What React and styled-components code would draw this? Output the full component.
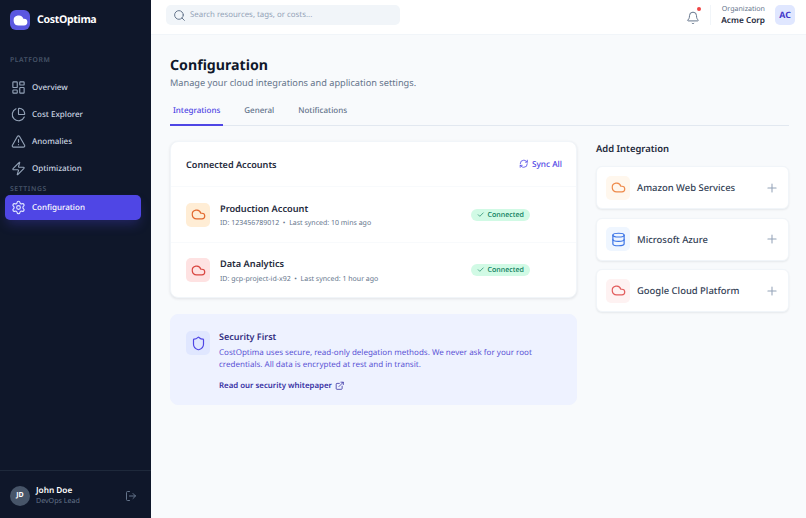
import React from 'react';
import styled, { createGlobalStyle } from 'styled-components';
import { LayoutDashboard, PieChart, TriangleAlert, Zap, Settings, LogOut, Search, Bell, Cloud, Database, Plus, RefreshCw, Check, Shield, ExternalLink } from 'lucide-react';

const Global = createGlobalStyle`
  * { box-sizing: border-box; }
  html, body { margin: 0; padding: 0; width: 806px; height: 518px; overflow: hidden; }
  body { font-family: "Noto Sans", "Liberation Sans", sans-serif; background: #f8fafc; text-rendering: geometricPrecision; }
`;
const Shell = styled.div`display: flex; width: 806px; height: 518px;`;
const Sidebar = styled.aside`
  width: 151px; flex: none; background: #0f172a; display: flex; flex-direction: column;
`;
const Brand = styled.div`display: flex; align-items: center; gap: 7px; padding: 10px 10px 0; height: 30px;`;
const LogoMark = styled.div`
  width: 20px; height: 20px; border-radius: 6px; background: #5b57e0; display: flex; align-items: center; justify-content: center;
`;
const BrandName = styled.span`color: #fff; font-size: 10.6px; font-weight: 700; letter-spacing: -0.35px;`;
const SectionLabel = styled.div`
  color: #475569; font-size: 6.8px; font-weight: 600; letter-spacing: 0.6px; padding: 0 10px;
  margin-top: ${p => p.$top}px; margin-bottom: ${p => p.$bottom}px; line-height: 10px;
`;
const Nav = styled.nav`display: flex; flex-direction: column; gap: 2px; padding: 0 10px 0 5px;`;
const NavItem = styled.div`
  display: flex; align-items: center; gap: 6px; height: 25px; padding: 0 6px; border-radius: 5px;
  font-size: 8px; font-weight: 500; color: ${p => p.$active ? '#fff' : '#cbd5e1'};
  background: ${p => p.$active ? '#4f46e5' : 'transparent'};
  box-shadow: ${p => p.$active ? '0 6px 12px -2px rgba(79,70,229,.3)' : 'none'};
  svg { color: ${p => p.$active ? '#e0e7ff' : '#94a3b8'}; flex: none; }
`;
const Footer = styled.div`
  margin-top: auto; height: 48px; border-top: 1px solid #1e293b; display: flex; align-items: center; padding: 2px 14px 0 10px;
`;
const Avatar = styled.div`
  width: 20px; height: 20px; border-radius: 50%; background: #475569; color: #fff; font-size: 7px; font-weight: 700;
  display: flex; align-items: center; justify-content: center; flex: none;
`;
const UserText = styled.div`margin-left: 6px; flex: 1; line-height: 11px; padding-top: 1px;`;
const UserName = styled.div`color: #fff; font-size: 8.26px; font-weight: 600;`;
const UserRole = styled.div`color: #64748b; font-size: 7.08px;`;
const MainCol = styled.div`flex: 1; min-width: 0; display: flex; flex-direction: column;`;
const Topbar = styled.header`
  height: 35px; flex: none; background: #fff; border-bottom: 1px solid #f1f5f9; display: flex; align-items: flex-start; padding: 5px 11px 0 15px;
`;
const SearchBox = styled.div`
  width: 234px; height: 20px; background: #f1f5f9; border-radius: 5px; display: flex; align-items: center; gap: 4.5px; padding: 0 6.5px;
  color: #94a3b8; font-size: 7.87px;
  svg { color: #64748b; }
`;
const TopRight = styled.div`margin-left: auto; display: flex; align-items: center; height: 20px;`;
const BellWrap = styled.div`position: relative; width: 14px; height: 14px; color: #64748b; margin-right: 10px;`;
const BellDot = styled.span`position: absolute; top: -1px; right: -1px; width: 4px; height: 4px; border-radius: 50%; background: #ef4444;`;
const VDivider = styled.div`width: 1px; height: 20px; background: #f1f5f9; margin-right: 10px;`;
const OrgText = styled.div`text-align: right; line-height: 11px; margin-right: 10px;`;
const OrgLabel = styled.div`color: #64748b; font-size: 7.08px;`;
const OrgName = styled.div`color: #1e293b; font-size: 8.26px; font-weight: 600;`;
const OrgBadge = styled.div`
  width: 20px; height: 20px; border-radius: 5px; background: #e0e7ff; color: #4338ca; font-size: 8.8px; font-weight: 700;
  display: flex; align-items: center; justify-content: center;
`;
const Content = styled.main`flex: 1; padding: 21px 17px 0 19px;`;
const Title = styled.h1`margin: 0; font-size: 14.16px; line-height: 20px; font-weight: 700; color: #0f172a;`;
const Subtitle = styled.p`margin: 0; font-size: 9.2px; line-height: 13px; color: #64748b;`;
const Tabs = styled.div`display: flex; gap: 18px; margin-top: 9px; border-bottom: 1px solid #e2e8f0; height: 28px;`;
const Tab = styled.div`
  padding: 5.5px 3px 0; height: 28px; font-size: 8px; font-weight: 500; line-height: 14px;
  color: ${p => p.$active ? '#4f46e5' : '#64748b'};
  border-bottom: 2px solid ${p => p.$active ? '#4f46e5' : 'transparent'};
`;
const Columns = styled.div`display: flex; gap: 19px; margin-top: 15px; align-items: flex-start;`;
const LeftCol = styled.div`width: 407px; flex: none; display: flex; flex-direction: column; gap: 16px;`;
const RightCol = styled.div`flex: 1; min-width: 0; padding-top: 1px;`;
const Card = styled.section`
  background: #fff; border: 1px solid #f1f5f9; border-radius: 8px; box-shadow: 0 1px 3px rgba(15,23,42,.1);
`;
const CardHeader = styled.div`
  height: 45px; padding: 0 14px 0 15px; display: flex; align-items: center; justify-content: space-between; border-bottom: 1px solid #f8fafc;
`;
const CardTitle = styled.h2`margin: 0; font-size: 9.1px; font-weight: 600; color: #1e293b;`;
const SyncBtn = styled.div`display: flex; align-items: center; gap: 3px; color: #4f46e5; font-size: 8.26px; font-weight: 500;`;
const AccountRow = styled.div`
  height: ${p => p.$h}px; padding: 0 14px 0 15px; display: flex; align-items: center;
  border-top: ${p => p.$rule ? '1px solid #f8fafc' : 'none'};
`;
const IconTile = styled.div`
  width: 24px; height: 24px; border-radius: 5px; flex: none; display: flex; align-items: center; justify-content: center;
  background: ${p => p.$bg}; color: ${p => p.$fg};
`;
const AccountInfo = styled.div`margin-left: 10px; width: 251px; flex: none; margin-top: 2px;`;
const AccountName = styled.div`font-size: 9.2px; line-height: 14px; font-weight: 600; color: #1e293b;`;
const AccountMeta = styled.div`font-size: 7px; line-height: 10px; margin-top: 3.5px; color: #64748b; white-space: pre;`;
const Pill = styled.span`
  display: inline-flex; align-items: center; gap: 3px; height: 12px; padding: 0 6px; border-radius: 6px;
  background: #d1fae5; color: #047857; font-size: 7.08px; font-weight: 500;
`;
const Notice = styled.section`
  background: #eef2ff; border-radius: 8px; height: 91px; padding: 15px 15px; display: flex; gap: 9px; border: 1px solid #eef2ff;
`;
const NoticeTile = styled(IconTile)`background: #e0e7ff; color: #4f46e5; margin-top: 1px;`;
const NoticeBody = styled.div`flex: 1; min-width: 0;`;
const NoticeTitle = styled.h3`margin: 0; font-size: 9px; line-height: 13px; font-weight: 600; color: #312e81;`;
const NoticeText = styled.p`margin: 4px 0 0; font-size: 8.03px; line-height: 12px; color: #5a52d5;`;
const NoticeLink = styled.a`
  display: inline-flex; align-items: center; gap: 3px; margin-top: 5px; font-size: 7.85px; font-weight: 600; color: #3730a3; line-height: 12px;
`;
const SideTitle = styled.h2`margin: 0 0 10px; font-size: 9.44px; line-height: 14px; font-weight: 600; color: #1e293b;`;
const IntegrationList = styled.div`display: flex; flex-direction: column; gap: 8.5px;`;
const IntegrationCard = styled.div`
  height: 43px; background: #fff; border: 1px solid #f1f5f9; border-radius: 6px; box-shadow: 0 1px 2px rgba(15,23,42,.08);
  display: flex; align-items: center; padding: 0 9px; gap: 7px;
`;
const IntegrationName = styled.span`flex: 1; font-size: 9.44px; font-weight: 500; color: #334155;`;
const AddIcon = styled.span`display: flex; color: #94a3b8;`;

const nav = [[LayoutDashboard, 'Overview'], [PieChart, 'Cost Explorer'], [TriangleAlert, 'Anomalies'], [Zap, 'Optimization']];

export default function App() {
  return (
    <Shell>
      <Global />
      <Sidebar>
        <Brand>
          <LogoMark><Cloud size={15} color="#fff" fill="#fff" /></LogoMark>
          <BrandName>CostOptima</BrandName>
        </Brand>
        <SectionLabel $top={25} $bottom={10}>PLATFORM</SectionLabel>
        <Nav>
          {nav.map(([I, t]) => <NavItem key={t}><I size={15} strokeWidth={1.8} />{t}</NavItem>)}
        </Nav>
        <SectionLabel $top={3} $bottom={1}>SETTINGS</SectionLabel>
        <Nav>
          <NavItem $active><Settings size={15} strokeWidth={1.8} />Configuration</NavItem>
        </Nav>
        <Footer>
          <Avatar>JD</Avatar>
          <UserText>
            <UserName>John Doe</UserName>
            <UserRole>DevOps Lead</UserRole>
          </UserText>
          <LogOut size={12} color="#64748b" />
        </Footer>
      </Sidebar>
      <MainCol>
        <Topbar>
          <SearchBox><Search size={13} strokeWidth={1.8} />Search resources, tags, or costs...</SearchBox>
          <TopRight>
            <BellWrap><Bell size={14} strokeWidth={1.7} /><BellDot /></BellWrap>
            <VDivider />
            <OrgText>
              <OrgLabel>Organization</OrgLabel>
              <OrgName>Acme Corp</OrgName>
            </OrgText>
            <OrgBadge>AC</OrgBadge>
          </TopRight>
        </Topbar>
        <Content>
          <Title>Configuration</Title>
          <Subtitle>Manage your cloud integrations and application settings.</Subtitle>
          <Tabs>
            <Tab $active>Integrations</Tab>
            <Tab>General</Tab>
            <Tab>Notifications</Tab>
          </Tabs>
          <Columns>
            <LeftCol>
              <Card>
                <CardHeader>
                  <CardTitle>Connected Accounts</CardTitle>
                  <SyncBtn><RefreshCw size={9.5} />Sync All</SyncBtn>
                </CardHeader>
                <AccountRow $h={55}>
                  <IconTile $bg="#ffedd5" $fg="#e2682e"><Cloud size={15} strokeWidth={1.9} /></IconTile>
                  <AccountInfo>
                    <AccountName>Production Account</AccountName>
                    <AccountMeta>ID: 123456789012  •  Last synced: 10 mins ago</AccountMeta>
                  </AccountInfo>
                  <Pill><Check size={7.5} />Connected</Pill>
                </AccountRow>
                <AccountRow $h={55} $rule>
                  <IconTile $bg="#fee2e2" $fg="#d9453f"><Cloud size={15} strokeWidth={1.9} /></IconTile>
                  <AccountInfo>
                    <AccountName>Data Analytics</AccountName>
                    <AccountMeta>ID: gcp-project-id-x92  •  Last synced: 1 hour ago</AccountMeta>
                  </AccountInfo>
                  <Pill><Check size={7.5} />Connected</Pill>
                </AccountRow>
              </Card>
              <Notice>
                <NoticeTile><Shield size={15} strokeWidth={1.9} /></NoticeTile>
                <NoticeBody>
                  <NoticeTitle>Security First</NoticeTitle>
                  <NoticeText>CostOptima uses secure, read-only delegation methods. We never ask for your root credentials. All data is encrypted at rest and in transit.</NoticeText>
                  <NoticeLink>Read our security whitepaper <ExternalLink size={9.5} /></NoticeLink>
                </NoticeBody>
              </Notice>
            </LeftCol>
            <RightCol>
              <SideTitle>Add Integration</SideTitle>
              <IntegrationList>
                <IntegrationCard>
                  <IconTile $bg="#fff7ed" $fg="#ee8a4a"><Cloud size={15} strokeWidth={1.9} /></IconTile>
                  <IntegrationName>Amazon Web Services</IntegrationName>
                  <AddIcon><Plus size={14} strokeWidth={1.8} /></AddIcon>
                </IntegrationCard>
                <IntegrationCard>
                  <IconTile $bg="#eff6ff" $fg="#3b74e6"><Database size={15} strokeWidth={1.9} /></IconTile>
                  <IntegrationName>Microsoft Azure</IntegrationName>
                  <AddIcon><Plus size={14} strokeWidth={1.8} /></AddIcon>
                </IntegrationCard>
                <IntegrationCard>
                  <IconTile $bg="#fef2f2" $fg="#e25c5c"><Cloud size={15} strokeWidth={1.9} /></IconTile>
                  <IntegrationName>Google Cloud Platform</IntegrationName>
                  <AddIcon><Plus size={14} strokeWidth={1.8} /></AddIcon>
                </IntegrationCard>
              </IntegrationList>
            </RightCol>
          </Columns>
        </Content>
      </MainCol>
    </Shell>
  );
}
